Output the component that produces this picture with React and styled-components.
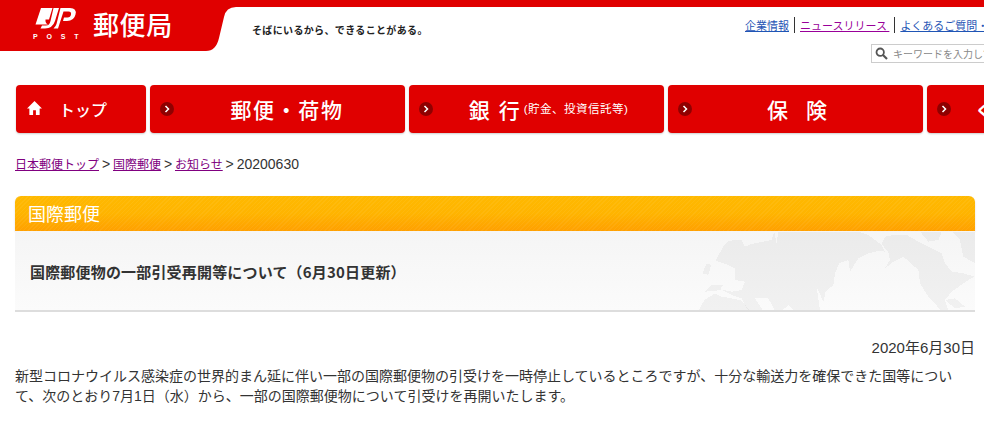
import React from 'react'
import styled, { createGlobalStyle } from 'styled-components'

const jp = `"Noto Sans CJK JP", "Liberation Sans", sans-serif`
const latinJp = `"Liberation Sans", "Noto Sans CJK JP", sans-serif`

const Global = createGlobalStyle`
  html, body { margin: 0; padding: 0; background: #fff; overflow: hidden; }
  body { font-family: ${latinJp}; color: #333; }
`
const Page = styled.div`
  width: 984px;
  height: 426px;
  overflow: hidden;
`
const Header = styled.header`
  height: 85px;
  border-top: 7px solid #e00000;
  box-sizing: border-box;
  display: flex;
  justify-content: space-between;
`
const HeaderLeft = styled.div`
  display: flex;
  align-items: flex-start;
`
const LogoBlock = styled.div`
  width: 206px;
  height: 44px;
  background: #e00000;
  display: flex;
  align-items: flex-start;
  padding-left: 33px;
  box-sizing: border-box;
  gap: 12px;
`
const Mark = styled.div`
  width: 48px;
  display: flex;
  flex-direction: column;
`
const Post = styled.span`
  font: bold 7px/6px "Liberation Sans", sans-serif;
  letter-spacing: 8.8px;
  color: #fff;
  white-space: nowrap;
`
const Brand = styled.span`
  font: 500 26px/29px ${jp};
  letter-spacing: 0.6px;
  color: #fff;
  margin-top: 2px;
`
const Curve = styled.svg`
  flex: none;
  display: block;
`
const Tagline = styled.span`
  font: 700 10px/14px ${jp};
  letter-spacing: 0.35px;
  color: #222;
  margin: 16px 0 0 14px;
`
const Utility = styled.div`
  width: 239px;
  display: flex;
  flex-direction: column;
  align-items: flex-start;
`
const UtilLinks = styled.nav`
  display: flex;
  margin-top: 10px;
  white-space: nowrap;
`
const UtilLink = styled.a`
  font: 11px/16px ${jp};
  color: ${p => (p.$visited ? '#990099' : '#1f55b5')};
  text-decoration: underline;
  padding: 0 5px;
  border-right: ${p => (p.$last ? 'none' : '1px solid #333')};
  &:first-child { padding-left: 0; }
`
const Search = styled.div`
  flex: none;
  margin: 11px 0 0 126px;
  width: 140px;
  height: 19px;
  border: 1px solid #ccc;
  box-sizing: border-box;
  display: flex;
  align-items: center;
  padding-left: 3px;
  gap: 5px;
  font: 10px/17px ${jp};
  color: #888;
  white-space: nowrap;
  svg { flex: none; }
`
const Nav = styled.nav`
  display: flex;
  gap: 4px;
  padding-left: 16px;
`
const NavItem = styled.a`
  flex: none;
  box-sizing: border-box;
  width: ${p => p.$w || 255}px;
  height: 48px;
  padding-left: ${p => p.$pl || 0}px;
  background: #e00000;
  border-radius: 4px;
  box-shadow: 0 1px 2px rgba(0, 0, 0, 0.2);
  color: #fff;
  display: flex;
  align-items: center;
  justify-content: center;
  position: relative;
  font: 500 21px/24px ${jp};
  letter-spacing: ${p => p.$ls ?? 4}px;
  white-space: nowrap;
`
const Bullet = styled.span`
  position: absolute;
  left: 10px;
  top: 17px;
  width: 14px;
  height: 14px;
  border-radius: 50%;
  background: #8f0000;
  display: flex;
  align-items: center;
  justify-content: center;
`
const HomeLabel = styled.span`
  font: 500 16px/24px ${jp};
  letter-spacing: 0;
  margin-left: 4px;
`
const HomeIcon = styled.svg`
  position: absolute;
  left: 11px;
  top: 16px;
`
const Small = styled.span`
  font: 400 11.5px/24px ${latinJp};
  letter-spacing: 0.5px;
  margin-left: -5px;
`
const Crumbs = styled.div`
  margin: 23px 0 0 15px;
  font: 14px/17px ${latinJp};
  word-spacing: -1px;
  color: #333;
  white-space: nowrap;
`
const CrumbLink = styled.a`
  font-size: 12px;
  color: #800080;
  text-decoration: underline;
`
const Section = styled.section`
  margin: 22px 9px 0 15px;
`
const Band = styled.div`
  height: 35px;
  border-radius: 6px 6px 0 0;
  background:
    repeating-linear-gradient(135deg, rgba(255, 255, 255, 0.05) 0 1px, transparent 1px 3px),
    linear-gradient(#ffb900 0%, #ffb400 50%, #ffa000 100%);
  color: #fff;
  font: 400 18px/35px ${jp};
  padding-left: 13px;
  box-shadow: 0 1px 2px rgba(0, 0, 0, 0.15);
  position: relative;
`
const TitleBox = styled.div`
  height: 79px;
  position: relative;
  overflow: hidden;
  background: linear-gradient(#f5f5f5, #fbfbfb);
  border-bottom: 2px solid #ddd;
  display: flex;
  align-items: center;
  padding-left: 15px;
`
const Title = styled.h1`
  margin: 2px 0 0;
  font: 700 15px/20px ${jp};
  color: #333;
  letter-spacing: 0.18px;
  position: relative;
`
const WorldMap = styled.svg`
  position: absolute;
  right: 0;
  top: 0;
`
const DateLine = styled.p`
  margin: 26px 0 0;
  text-align: right;
  font: 15px/20px ${latinJp};
  color: #333;
`
const Body = styled.p`
  margin: 8px 24px 0 15px;
  font: 14px/20px ${latinJp};
  color: #333;
`

const Chevron = () => (
  <Bullet>
    <svg width="6" height="8" viewBox="0 0 6 8">
      <path d="M1.5 1 L4.5 4 L1.5 7" fill="none" stroke="#fff" strokeWidth="1.5" />
    </svg>
  </Bullet>
)

const App = () => (
  <Page>
    <Global />
    <Header>
      <HeaderLeft>
        <LogoBlock>
          <Mark>
            <svg width="48" height="27" viewBox="0 0 48 27">
              <path d="M8 1 H19.5 L16 12.5 H12.5 Q12 16 15 17.5 H2.5 Z" fill="#fff" />
              <path d="M20.5 1 H26 L22 14 Q19.5 21.5 12 21.5 H7.5 L9 18.5 H13 Q16.5 18.5 17.5 14 Z" fill="#fff" />
              <path d="M27.5 1 H37 Q44 1 42.5 7.5 Q41 14 34 14 H30 L31 10.5 H34.5 Q37.5 10.5 38 7.5 Q38.5 4.5 35.5 4.5 H30.5 L25 21.5 H20.5 Q23 19 23.5 17 Z" fill="#fff" />
            </svg>
            <Post>POST</Post>
          </Mark>
          <Brand>郵便局</Brand>
        </LogoBlock>
        <Curve width="32" height="44" viewBox="0 0 32 44">
          <path d="M0 0 H30 Q20 0 18 10 L13 31 Q10 44 0 44 Z" fill="#e00000" />
        </Curve>
        <Tagline>そばにいるから、できることがある。</Tagline>
      </HeaderLeft>
      <Utility>
        <UtilLinks>
          <UtilLink>企業情報</UtilLink>
          <UtilLink $visited>ニュースリリース&nbsp;</UtilLink>
          <UtilLink $last>よくあるご質問・お問い合わせ</UtilLink>
        </UtilLinks>
        <Search>
          <svg width="13" height="13" viewBox="0 0 13 13">
            <circle cx="5.2" cy="5.2" r="3.7" fill="none" stroke="#555" strokeWidth="1.8" />
            <path d="M8 8 L12 12" stroke="#555" strokeWidth="2.2" />
          </svg>
          キーワードを入力してください
        </Search>
      </Utility>
    </Header>
    <Nav>
      <NavItem $w={130}>
        <HomeIcon width="15" height="14" viewBox="0 0 16 15">
          <path d="M8 0 L16 8 H13.5 V15 H9.5 V10 H6.5 V15 H2.5 V8 H0 Z" fill="#fff" />
        </HomeIcon>
        <HomeLabel>トップ</HomeLabel>
      </NavItem>
      <NavItem $pl={19} $ls={1.6}><Chevron />郵便・荷物</NavItem>
      <NavItem $pl={24} $ls={9}><Chevron />銀行<Small>(貯金、投資信託等)</Small></NavItem>
      <NavItem $pl={21} $ls={18}><Chevron />保険</NavItem>
      <NavItem $pl={7} $ls={3}><Chevron />くらしサポート</NavItem>
    </Nav>
    <Crumbs>
      <CrumbLink>日本郵便トップ</CrumbLink> &gt; <CrumbLink>国際郵便</CrumbLink> &gt; <CrumbLink>お知らせ</CrumbLink> &gt; 20200630
    </Crumbs>
    <Section>
      <Band>国際郵便</Band>
      <TitleBox>
        <WorldMap width="278" height="80" viewBox="6 3 834 240" shapeRendering="crispEdges">
          <g fill="#000" fillOpacity="0.04">
            <path d="M30 185 L50 165 L85 165 L75 178 L110 185 L140 180 L150 155 L120 150 L120 115 L100 105 L85 100 L70 95 L62 90 L85 50 L100 32 L140 30 L150 50 L170 42 L230 30 L238 5 L245 40 L250 5 L490 5 L520 15 L560 45 L570 65 L555 62 L520 70 L490 85 L465 125 L460 90 L432 100 L420 130 L415 165 L392 185 L385 215 L365 170 L375 243 L300 243 L280 225 L260 243 L240 243 L220 205 L180 205 L205 243 L160 243 L140 205 L110 195 L80 180 Z" />
            <path d="M10 243 L28 210 L60 190 L80 200 L110 205 L140 212 L165 243 Z" />
            <path d="M22 130 L35 100 L48 105 L40 135 Z" />
            <path d="M560 40 L570 20 L595 15 L635 15 L670 35 L690 45 L740 70 L750 100 L770 125 L805 130 L840 140 L820 150 L770 185 L750 210 L760 243 L740 243 L700 200 L675 160 L670 120 L625 80 L595 95 L570 115 L585 90 L580 65 L570 55 Z" />
            <path d="M675 5 L740 5 L730 30 L700 35 Z" />
            <path d="M770 5 L840 5 L840 100 L805 80 L795 30 Z" />
            <path d="M750 210 L780 205 L810 230 L780 235 Z" />
          </g>
        </WorldMap>
        <Title>国際郵便物の一部引受再開等について（6月30日更新）</Title>
      </TitleBox>
      <DateLine>2020年6月30日</DateLine>
    </Section>
    <Body>
      新型コロナウイルス感染症の世界的まん延に伴い一部の国際郵便物の引受けを一時停止しているところですが、十分な輸送力を確保できた国等について、次のとおり7月1日（水）から、一部の国際郵便物について引受けを再開いたします。
    </Body>
  </Page>
)

export default App
